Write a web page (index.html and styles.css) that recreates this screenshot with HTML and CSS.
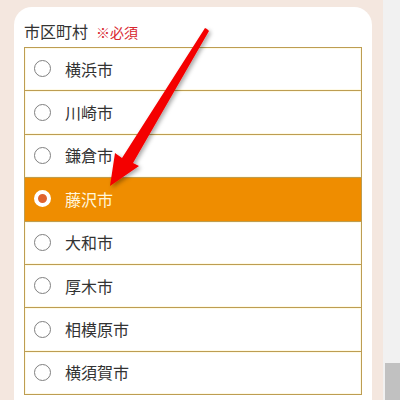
FILE: index.html
```html
<!DOCTYPE html>
<html lang="ja">
<head>
    <meta charset="UTF-8">
    <title>市区町村</title>
    <link rel="stylesheet" href="styles.css">
</head>
<body>
    <div id="page">
        <div id="main">
            <div class="card">
                <p class="label">市区町村<span class="req">※必須</span></p>
                <ul class="city-list">
                    <li><span class="radio"></span>横浜市</li>
                    <li><span class="radio"></span>川崎市</li>
                    <li><span class="radio"></span>鎌倉市</li>
                    <li class="selected"><span class="radio"></span>藤沢市</li>
                    <li><span class="radio"></span>大和市</li>
                    <li><span class="radio"></span>厚木市</li>
                    <li><span class="radio"></span>相模原市</li>
                    <li><span class="radio"></span>横須賀市</li>
                </ul>
            </div>
        </div>
        <div id="scrollbar">
            <div class="thumb"></div>
        </div>
    </div>

    <!-- 注釈の矢印 -->
    <svg class="arrow" width="400" height="400" viewBox="0 0 400 400">
        <defs>
            <filter id="shadow" x="-20%" y="-20%" width="140%" height="140%">
                <feDropShadow dx="2" dy="2" stdDeviation="2" flood-color="#000" flood-opacity="0.35"/>
            </filter>
        </defs>
        <polygon filter="url(#shadow)" fill="#f40000"
                 points="207,29 209,31 133,163 139,166 110,186 115,153 122,158 205,28"/>
    </svg>
</body>
</html>
```

FILE: styles.css
```css
*{
    margin: 0;
    padding: 0;
}
ul{
    list-style: none;
}
html,body{
    width: 400px;
    height: 400px;
    overflow: hidden;
}
body{
    background: #f4e7df;
    font-family: "Noto Sans CJK JP", "Noto Sans", sans-serif;
    color: #333;
}
#page{
    display: flex;
    height: 400px;
}
#main{
    flex: 1;
    padding: 7px 11px 0 14px;
}
.card{
    background: #fff;
    border-radius: 18px 18px 0 0;
    padding: 12px 10px 0 10px;
    height: 400px;
}
.label{
    font-size: 16px;
    line-height: 24px;
    margin-bottom: 3px;
}
.req{
    color: #d8262e;
    font-size: 14px;
    margin-left: 8px;
}
.city-list{
    border: 1px solid #bd9d52;
    border-bottom: none;
}
.city-list li{
    height: 43.4px;
    box-sizing: border-box;
    display: flex;
    align-items: center;
    gap: 14px;
    padding-left: 9px;
    padding-bottom: 1px;
    font-size: 16px;
    border-bottom: 1px solid #bd9d52;
    box-shadow: inset 0 0 0 1px #fffae6;
}
.radio{
    width: 17px;
    height: 17px;
    box-sizing: border-box;
    border: 1px solid #808080;
    border-radius: 50%;
    background: #fff;
}
.city-list li.selected{
    background: #ef8d00;
    color: #fff6dc;
    box-shadow: none;
}
.selected .radio{
    border: 4px solid #fff;
    background: #e0632e;
}
#scrollbar{
    width: 17px;
    background: #f1f1f1;
    display: flex;
    flex-direction: column;
    justify-content: flex-end;
}
.thumb{
    height: 37px;
    margin-left: 2px;
    background: #c1c1c1;
}
.arrow{
    position: absolute;/*画面全体に重ねる*/
    left: 0;
    top: 0;
}
```
